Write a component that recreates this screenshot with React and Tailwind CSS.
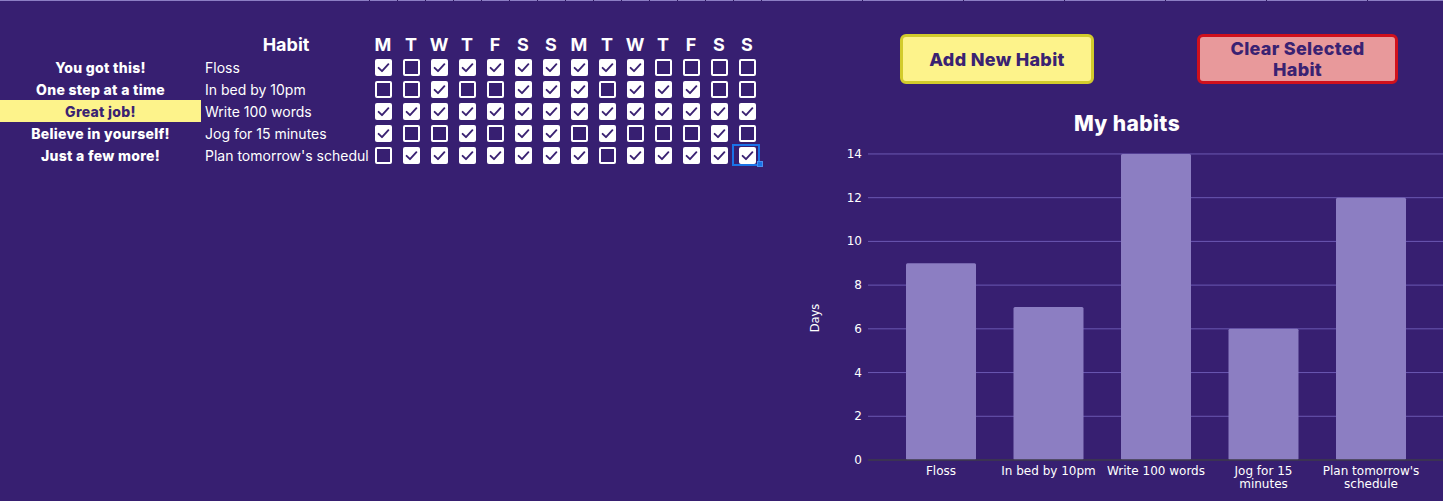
import React from 'react';

const DAYS = ['M', 'T', 'W', 'T', 'F', 'S', 'S', 'M', 'T', 'W', 'T', 'F', 'S', 'S'];

const HABITS = [
  { cheer: 'You got this!', name: 'Floss', days: '10111111110000' },
  { cheer: 'One step at a time', name: 'In bed by 10pm', days: '00100111011100' },
  { cheer: 'Great job!', name: 'Write 100 words', days: '11111111111111', highlight: true },
  { cheer: 'Believe in yourself!', name: 'Jog for 15 minutes', days: '10010110100010' },
  { cheer: 'Just a few more!', name: "Plan tomorrow's schedule", days: '01111111011111' },
];

const CHART = [
  { label: ['Floss'], value: 9 },
  { label: ['In bed by 10pm'], value: 7 },
  { label: ['Write 100 words'], value: 14 },
  { label: ['Jog for 15', 'minutes'], value: 6 },
  { label: ["Plan tomorrow's", 'schedule'], value: 12 },
];

const Checkbox = ({ checked }) =>
  checked ? (
    <div className="w-[17px] h-[17px] rounded-[2px] bg-white">
      <svg width="17" height="17" viewBox="0 0 17 17">
        <path d="M3.6 8.8 L7 12.2 L13.4 5.2" fill="none" stroke="#3a2272" strokeWidth="1.9" strokeLinecap="round" strokeLinejoin="round" />
      </svg>
    </div>
  ) : (
    <div className="w-[17px] h-[17px] rounded-[2px] border-2 border-white" />
  );

const Sheet = () => (
  <div className="w-[780px] pt-[32px] font-['Inter',sans-serif] text-white">
    {/* header row */}
    <div className="flex h-[23px] items-center">
      <div className="w-[201px]" />
      <div className="w-[168px] text-center text-[18px] font-bold pl-[2px]">Habit</div>
      {DAYS.map((d, i) => (
        <div key={i} className="w-[28px] text-center text-[18px] font-bold">{d}</div>
      ))}
    </div>
    {HABITS.map((h, r) => (
      <div key={h.name} className="flex h-[22px] items-center">
        <div
          className={
            h.highlight
              ? 'w-[201px] h-full flex items-center justify-center bg-[#fdf38b] text-[#3a2272] text-[14px] font-extrabold tracking-[0.3px]'
              : 'w-[201px] h-full flex items-center justify-center text-[14px] font-extrabold tracking-[0.3px]'
          }
        >
          {h.cheer}
        </div>
        <div className="w-[168px] pl-[4px] text-[14px] whitespace-nowrap overflow-hidden">{h.name}</div>
        {h.days.split('').map((c, i) => (
          <div key={i} className="w-[28px] h-full flex items-center justify-center relative">
            <Checkbox checked={c === '1'} />
            {r === 4 && i === 13 && (
              <div className="absolute left-[-1px] top-0 w-[28px] h-[22px] border-2 border-[#1a73e8]">
                <div className="absolute right-[-5px] bottom-[-3px] w-[6px] h-[6px] bg-[#1a73e8] border border-[#4a8ef0]" />
              </div>
            )}
          </div>
        ))}
      </div>
    ))}
  </div>
);

const Chart = () => {
  const base = 376;
  const unit = 21.86;
  const grid = [2, 4, 6, 8, 10, 12, 14];
  return (
    <svg width="663" height="417" className="block">
      <text x="347" y="47" textAnchor="middle" fill="#fff" fontSize="21" fontWeight="800" letterSpacing="0.4" fontFamily="Inter, sans-serif">
        My habits
      </text>
      {grid.map((g) => (
        <line key={g} x1="88" x2="663" y1={base - g * unit} y2={base - g * unit} stroke="#6b58b2" strokeWidth="1" />
      ))}
      {[0, ...grid].map((g) => (
        <text key={g} x="82" y={base - g * unit + 4} textAnchor="end" fill="#fff" fontSize="12" fontFamily="DejaVu Sans, sans-serif">
          {g}
        </text>
      ))}
      <text x="0" y="0" transform="translate(39 234) rotate(-90)" textAnchor="middle" fill="#fff" fontSize="11.5" fontFamily="DejaVu Sans, sans-serif">
        Days
      </text>
      {CHART.map((b, i) => {
        const x = 126 + i * 107.5;
        const hgt = b.value * unit;
        return (
          <g key={i}>
            <rect x={x} y={base - hgt} width="70" height={hgt} rx="1.5" fill="#8c7ec2" />
            {b.label.map((l, j) => (
              <text key={j} x={x + 35} y={391 + j * 13} textAnchor="middle" fill="#fff" fontSize="12" fontFamily="DejaVu Sans, sans-serif">
                {l}
              </text>
            ))}
          </g>
        );
      })}
      <line x1="88" x2="663" y1={base} y2={base} stroke="#3e3b4a" strokeWidth="1.5" />
    </svg>
  );
};

export default function App() {
  const ticks = Array.from({ length: 14 });
  const wide = Array.from({ length: 6 });
  return (
    <div className="w-[1443px] h-[501px] bg-[#371f71] overflow-hidden">
      <div className="flex h-px bg-[#8c7ec4]">
        <div className="w-[369px]" />
        {ticks.map((_, i) => (
          <div key={i} className="w-[28px] border-l border-[#2e1a60]" />
        ))}
        {wide.map((_, i) => (
          <div key={i} className="w-[101px] border-l border-[#2e1a60]" />
        ))}
        <div className="flex-1 border-l border-[#2e1a60]" />
      </div>
      <div className="flex">
        <Sheet />
        <div className="w-[663px] pt-[33px]">
          <div className="flex items-start pl-[120px] gap-[103px] font-['Inter',sans-serif] text-[#3a2272] font-extrabold text-[18px] tracking-[0.3px]">
            <div className="w-[194px] h-[50px] flex items-center justify-center rounded-[6px] bg-[#fdf38b] border-[3px] border-[#d2cb2c]">
              Add New Habit
            </div>
            <div className="w-[201px] h-[50px] flex items-center justify-center text-center leading-[21px] rounded-[6px] bg-[#e8999b] border-[3px] border-[#d0101c]">
              Clear Selected<br />Habit
            </div>
          </div>
          <Chart />
        </div>
      </div>
    </div>
  );
}
